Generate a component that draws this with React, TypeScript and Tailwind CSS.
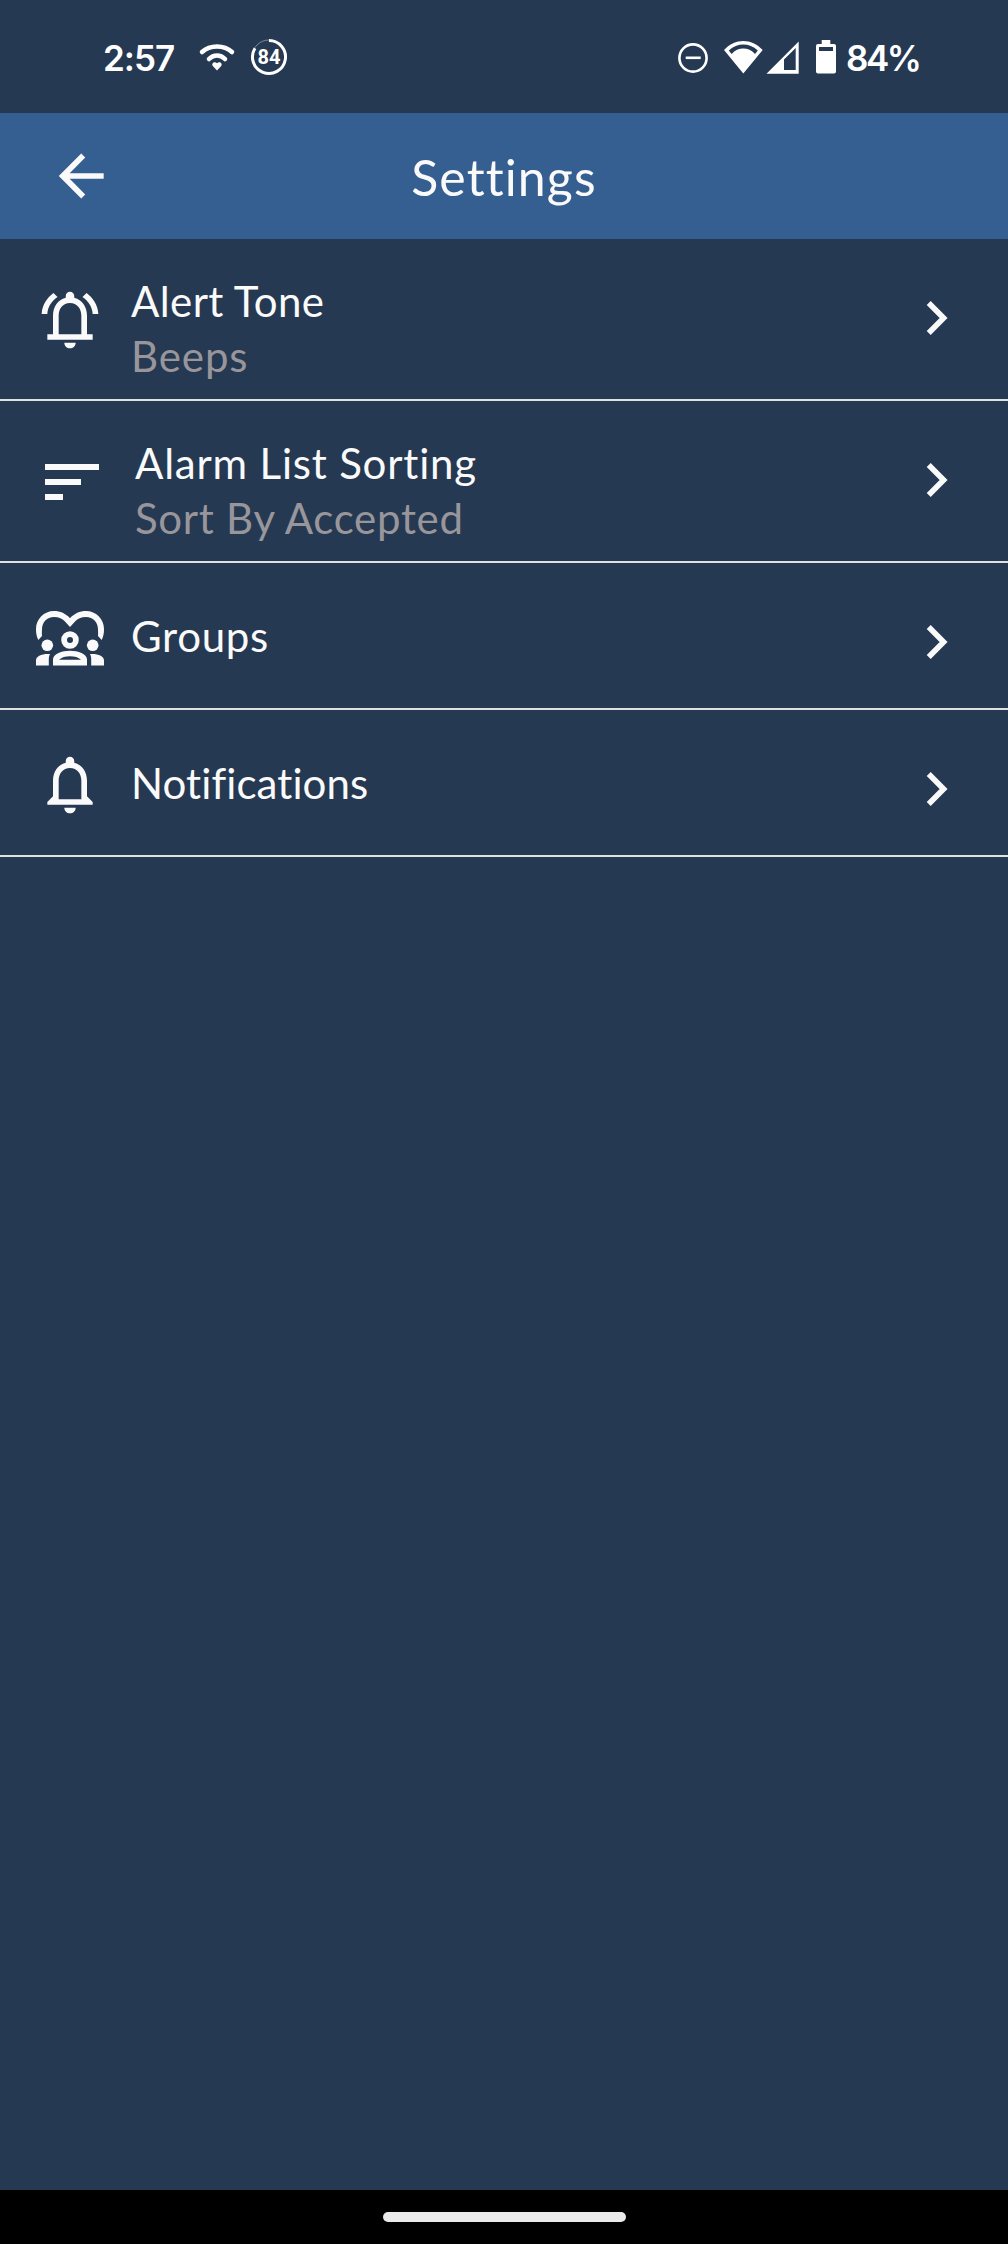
import type { ReactNode } from "react";

function StatusBar() {
  return (
    <div className="flex h-[113px] shrink-0 items-center justify-between pt-px pr-[90px] pl-[103px] font-['Inter',sans-serif] text-[35px] font-semibold text-white">
      <div className="flex items-center">
        <span className="w-[95px] pt-0.5 tracking-[-1px] whitespace-nowrap">2:57</span>
        <svg className="mr-3.5 h-[38px] w-[38px]" viewBox="0 0 38 38" fill="none">
          <path d="M4 14C12 6.5 26 6.5 34 14M11 21C15.5 16.2 22.5 16.2 27 21" stroke="currentColor" strokeWidth="4.5" strokeLinecap="round" />
          <path d="M19 32.5L14.8 28C13 25.5 16.5 22.6 19 25.3C21.5 22.6 25 25.5 23.2 28Z" fill="currentColor" />
        </svg>
        <div className="relative h-[38px] w-[38px]">
          <svg viewBox="0 0 38 38" fill="none" stroke="currentColor">
            <circle cx="19" cy="19" r="17" strokeWidth="1" opacity="0.4" />
            <path d="M19 2.5A16.5 16.5 0 1 1 5 10.26" strokeWidth="3" />
          </svg>
          <span className="absolute inset-0 flex items-center justify-center font-['Roboto',sans-serif] text-[20px] font-bold">84</span>
        </div>
      </div>
      <div className="flex items-center">
        <svg className="mr-3.5 h-[38px] w-8" viewBox="0 0 32 38" fill="none" stroke="currentColor" strokeWidth="2.6">
          <circle cx="16" cy="20" r="13.6" />
          <path d="M8.7 19.8h15" />
        </svg>
        <svg className="mr-px h-[38px] w-[41px]" viewBox="0 0 41 38" fill="currentColor">
          <path fillRule="evenodd" d="M20.3 35.5L1 12C12 0 28.6 0 39.7 12ZM5.8 12.5L8.6 16C15 8.7 25.6 8.7 32 16L34.8 12.5C26 4.6 14.6 4.6 5.8 12.5Z" />
        </svg>
        <svg className="mr-[15px] h-[38px] w-[35px]" viewBox="0 0 35 38" fill="currentColor">
          <path fillRule="evenodd" d="M1.5 35.8L33.7 3.4V35.8ZM19 21.5V32H30.7V10Z" />
        </svg>
        <svg className="mr-[9px] h-[38px] w-[22px]" viewBox="0 0 22 38" fill="currentColor">
          <path fillRule="evenodd" d="M6.7 2h8.6v4H19a2 2 0 0 1 2 2v25.5a2 2 0 0 1-2 2H3a2 2 0 0 1-2-2V8a2 2 0 0 1 2-2h3.7zM4 9v4h14V9z" />
        </svg>
        <span className="w-[72px] pt-0.5 tracking-[-2.5px] whitespace-nowrap">84%</span>
      </div>
    </div>
  );
}

function AlertIcon() {
  return (
    <svg className="mt-[47px] ml-9 h-[68px] w-[68px]" viewBox="0 0 24 24" fill="currentColor">
      <path d="M12 22c1.1 0 2-.9 2-2h-4c0 1.1.9 2 2 2zM18 17v-6.5c0-3.08-1.64-5.64-4.5-6.32V3.5C13.5 2.67 12.83 2 12 2s-1.5.67-1.5 1.5v.68C7.63 4.86 6 7.42 6 10.5V17H4v2h16v-2zM16 17H8v-6.5C8 8 9.5 6 12 6s4 2 4 4.5z" />
      <path d="M7.6 3.9L6.15 2.5C3.9 4.2 2.1 6.8 2 9.9h2c.1-2.5 1.6-4.6 3.6-6zM16.4 3.9l1.45-1.4c2.25 1.7 4.05 4.3 4.15 7.4h-2c-.1-2.5-1.6-4.6-3.6-6z" />
    </svg>
  );
}

function SortIcon() {
  return (
    <svg className="mt-[63px] mr-[5px] ml-[45px] h-9 w-[54px]" viewBox="0 0 54 36" fill="currentColor">
      <path d="M0 0h54v6H0zM0 15h36v6H0zM0 30h18v6H0z" />
    </svg>
  );
}

function GroupsIcon() {
  return (
    <svg className="mt-[45px] ml-9 h-[68px] w-[68px]" viewBox="0 0 68 68" fill="currentColor">
      <path d="M2.3 32C.7 28.5 0 25.5 0 21C0 11 8 3 18 3C24 3 30 5.5 34 10.3C38 5.5 44 3 50 3C60 3 68 11 68 21C68 25.5 67.3 28.5 65.7 32L62 28C62.3 25 62 23 62 21.5C62 14 57 9 50 9C45 9 41.5 11 39.5 13L34 19L28.5 13C26.5 11 23 9 18 9C11 9 6 14 6 21.5C6 23 5.7 25 6 28Z" />
      <circle cx="11.3" cy="37.3" r="5.8" />
      <circle cx="56.7" cy="37.3" r="5.8" />
      <circle cx="34" cy="32" r="5.9" fill="none" stroke="currentColor" strokeWidth="5.8" />
      <path fillRule="evenodd" d="M17 57.5V51.5C17 45.5 26 42.7 34 42.7S51 45.5 51 51.5V57.5ZM23 51.7H45C42.5 49.3 38.5 48.2 34 48.2S25.5 49.3 23 51.7Z" />
      <path d="M0 57.5V52.5C0 48 5.5 45.6 14 46C12.9 48 12.8 50 12.8 51.5V57.5ZM68 57.5V52.5C68 48 62.5 45.6 54 46C55.1 48 55.2 50 55.2 51.5V57.5Z" />
    </svg>
  );
}

function BellIcon() {
  return (
    <svg className="mt-[41px] ml-9 h-[68px] w-[68px]" viewBox="0 0 24 24" fill="currentColor">
      <path d="M12 22c1.1 0 2-.9 2-2h-4c0 1.1.9 2 2 2zM18 16v-5.5c0-3.08-1.64-5.64-4.5-6.32V3.5C13.5 2.67 12.83 2 12 2s-1.5.67-1.5 1.5v.68C7.63 4.86 6 7.42 6 10.5V16l-2 2v1h16v-1zM16 17H8v-6.5C8 8 9.5 6 12 6s4 2 4 4.5z" />
    </svg>
  );
}

type RowProps = {
  icon: ReactNode;
  title: ReactNode;
  className: string;
  textClass: string;
  detail?: ReactNode;
};

function Row({ icon, title, detail, className, textClass }: RowProps) {
  return (
    <li className={`flex items-start border-b-2 border-[#e0e0e0] ${className}`}>
      {icon}
      <div className={`flex-1 text-[42px] leading-[55px] whitespace-nowrap ${textClass}`}>
        <p>{title}</p>
        {detail && <p className="text-[#98969b]">{detail}</p>}
      </div>
      <svg className="mt-[59px] mr-[58px] h-10 w-6" viewBox="0 0 24 40" fill="none" stroke="currentColor" strokeWidth="5.6">
        <path d="M2.7 5L17.6 20L2.7 35" />
      </svg>
    </li>
  );
}

export default function App() {
  return (
    <div className="flex h-[2244px] w-[1008px] flex-col overflow-hidden bg-[#263952] font-['Lato',sans-serif] text-[#fafafa]">
      <StatusBar />
      <header className="grid h-[126px] shrink-0 grid-cols-[1fr_auto_1fr] items-center bg-[#365f91]">
        <svg className="ml-[47px] h-[68px] w-[68px]" viewBox="0 0 24 24" fill="currentColor">
          <path d="M20 11v2H8l5.5 5.5-1.42 1.42L4.16 12l7.92-7.92L13.5 5.5 8 11z" />
        </svg>
        <h1 className="pt-0.5 text-[50px] tracking-[1.1px]">Settings</h1>
      </header>
      <ul className="flex-1">
        <Row
          className="h-[162px]"
          textClass="pt-[35px] pl-[27px]"
          icon={<AlertIcon />}
          title={<span className="tracking-[0.4px]">Alert Tone</span>}
          detail={<span className="tracking-[0.9px]">Beeps</span>}
        />
        <Row
          className="h-[162px]"
          textClass="pt-[35px] pl-[31px]"
          icon={<SortIcon />}
          title={<span className="tracking-[0.8px]">Alarm List Sorting</span>}
          detail={<span className="tracking-[0.7px]">Sort By Accepted</span>}
        />
        <Row
          className="h-[147px]"
          textClass="pt-[46px] pl-[27px]"
          icon={<GroupsIcon />}
          title={<span className="tracking-[0.7px]">Groups</span>}
        />
        <Row
          className="h-[147px]"
          textClass="pt-[46px] pl-[27px]"
          icon={<BellIcon />}
          title={<span className="tracking-[0.1px]">Notifications</span>}
        />
      </ul>
      <div className="flex h-[54px] shrink-0 justify-center bg-black pt-[22px]">
        <div className="h-[10px] w-[243px] rounded-full bg-[#ebebeb]" />
      </div>
    </div>
  );
}
